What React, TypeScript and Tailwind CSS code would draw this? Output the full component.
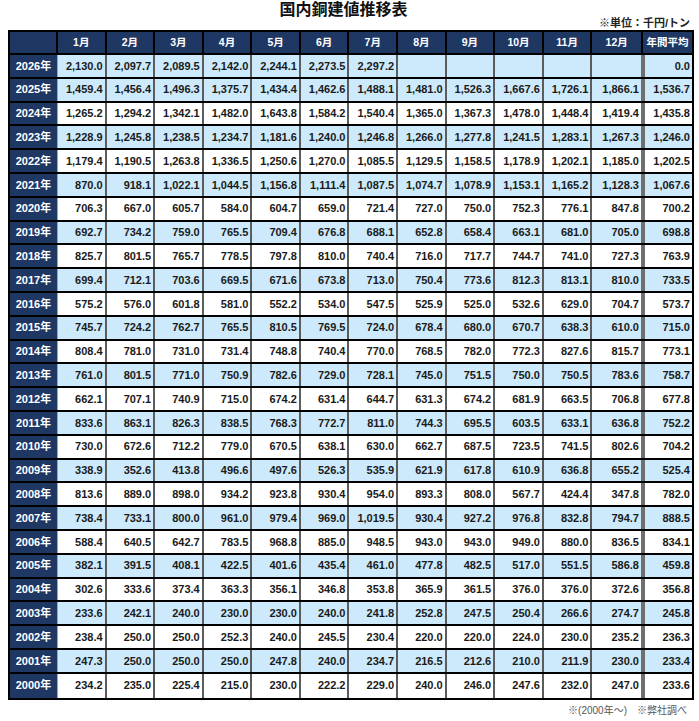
const months = ["1月", "2月", "3月", "4月", "5月", "6月", "7月", "8月", "9月", "10月", "11月", "12月"];

type Row = { year: number; values: string[]; avg: string };

const raw: [number, string, string][] = [
  [2026, "2,130.0 2,097.7 2,089.5 2,142.0 2,244.1 2,273.5 2,297.2 - - - - -", "0.0"],
  [2025, "1,459.4 1,456.4 1,496.3 1,375.7 1,434.4 1,462.6 1,488.1 1,481.0 1,526.3 1,667.6 1,726.1 1,866.1", "1,536.7"],
  [2024, "1,265.2 1,294.2 1,342.1 1,482.0 1,643.8 1,584.2 1,540.4 1,365.0 1,367.3 1,478.0 1,448.4 1,419.4", "1,435.8"],
  [2023, "1,228.9 1,245.8 1,238.5 1,234.7 1,181.6 1,240.0 1,246.8 1,266.0 1,277.8 1,241.5 1,283.1 1,267.3", "1,246.0"],
  [2022, "1,179.4 1,190.5 1,263.8 1,336.5 1,250.6 1,270.0 1,085.5 1,129.5 1,158.5 1,178.9 1,202.1 1,185.0", "1,202.5"],
  [2021, "870.0 918.1 1,022.1 1,044.5 1,156.8 1,111.4 1,087.5 1,074.7 1,078.9 1,153.1 1,165.2 1,128.3", "1,067.6"],
  [2020, "706.3 667.0 605.7 584.0 604.7 659.0 721.4 727.0 750.0 752.3 776.1 847.8", "700.2"],
  [2019, "692.7 734.2 759.0 765.5 709.4 676.8 688.1 652.8 658.4 663.1 681.0 705.0", "698.8"],
  [2018, "825.7 801.5 765.7 778.5 797.8 810.0 740.4 716.0 717.7 744.7 741.0 727.3", "763.9"],
  [2017, "699.4 712.1 703.6 669.5 671.6 673.8 713.0 750.4 773.6 812.3 813.1 810.0", "733.5"],
  [2016, "575.2 576.0 601.8 581.0 552.2 534.0 547.5 525.9 525.0 532.6 629.0 704.7", "573.7"],
  [2015, "745.7 724.2 762.7 765.5 810.5 769.5 724.0 678.4 680.0 670.7 638.3 610.0", "715.0"],
  [2014, "808.4 781.0 731.0 731.4 748.8 740.4 770.0 768.5 782.0 772.3 827.6 815.7", "773.1"],
  [2013, "761.0 801.5 771.0 750.9 782.6 729.0 728.1 745.0 751.5 750.0 750.5 783.6", "758.7"],
  [2012, "662.1 707.1 740.9 715.0 674.2 631.4 644.7 631.3 674.2 681.9 663.5 706.8", "677.8"],
  [2011, "833.6 863.1 826.3 838.5 768.3 772.7 811.0 744.3 695.5 603.5 633.1 636.8", "752.2"],
  [2010, "730.0 672.6 712.2 779.0 670.5 638.1 630.0 662.7 687.5 723.5 741.5 802.6", "704.2"],
  [2009, "338.9 352.6 413.8 496.6 497.6 526.3 535.9 621.9 617.8 610.9 636.8 655.2", "525.4"],
  [2008, "813.6 889.0 898.0 934.2 923.8 930.4 954.0 893.3 808.0 567.7 424.4 347.8", "782.0"],
  [2007, "738.4 733.1 800.0 961.0 979.4 969.0 1,019.5 930.4 927.2 976.8 832.8 794.7", "888.5"],
  [2006, "588.4 640.5 642.7 783.5 968.8 885.0 948.5 943.0 943.0 949.0 880.0 836.5", "834.1"],
  [2005, "382.1 391.5 408.1 422.5 401.6 435.4 461.0 477.8 482.5 517.0 551.5 586.8", "459.8"],
  [2004, "302.6 333.6 373.4 363.3 356.1 346.8 353.8 365.9 361.5 376.0 376.0 372.6", "356.8"],
  [2003, "233.6 242.1 240.0 230.0 230.0 240.0 241.8 252.8 247.5 250.4 266.6 274.7", "245.8"],
  [2002, "238.4 250.0 250.0 252.3 240.0 245.5 230.4 220.0 220.0 224.0 230.0 235.2", "236.3"],
  [2001, "247.3 250.0 250.0 250.0 247.8 240.0 234.7 216.5 212.6 210.0 211.9 230.0", "233.4"],
  [2000, "234.2 235.0 225.4 215.0 230.0 222.2 229.0 240.0 246.0 247.6 232.0 247.0", "233.6"],
];

const rows: Row[] = raw.map(([year, vals, avg]) => ({
  year,
  values: vals.split(" ").map((v) => (v === "-" ? "" : v)),
  avg,
}));

// 2026 and 2025 both blue, then alternate
const isBlue = (year: number) => year >= 2025 || year % 2 === 1;

function DataRow({ row, last }: { row: Row; last: boolean }) {
  const blue = isBlue(row.year);
  const bg = blue ? "bg-[#cdeafc]" : "bg-white";
  return (
    <div className={`grid grid-cols-[48px_repeat(12,minmax(0,1fr))_51px] h-[23.8px] ${last ? "" : "border-b-2 border-black"}`}>
      <div className="flex items-center justify-center bg-[#1f3763] text-white text-[11px] font-bold border-r border-[#9aa7b8]">
        {row.year}年
      </div>
      {row.values.map((v, i) => (
        <div
          key={i}
          className={`flex items-center justify-end pr-[2px] ${bg} text-[11px] font-bold text-[#1a1a1a] ${
            i === 11 ? "" : "border-r-2 border-[#5c5c5c]"
          }`}
        >
          {v}
        </div>
      ))}
      <div className={`flex items-center justify-end pr-[2px] ${bg} text-[11px] font-bold text-[#1a1a1a] border-l-[4px] border-[#6f6f6f]`}>
        {row.avg}
      </div>
    </div>
  );
}

export default function App() {
  return (
    <div
      className="w-[699px] h-[721px] bg-white overflow-hidden"
      style={{ fontFamily: '"Liberation Sans", "Noto Sans CJK JP", sans-serif' }}
    >
      <div className="h-[15px] leading-[19px] text-center text-[16px] font-bold text-[#111] pr-[12px]">
        国内銅建値推移表
      </div>
      <div className="h-[15px] flex justify-end items-center pt-[2px] pr-[9px] text-[11px] font-bold text-[#222]">
        ※単位：千円/トン
      </div>

      <div className="ml-[8px] w-[686px] border-2 border-black">
        <div className="grid grid-cols-[48px_repeat(12,minmax(0,1fr))_51px] h-[23px] bg-[#1f3763] border-b-2 border-black">
          <div className="border-r-2 border-black" />
          {months.map((m, i) => (
            <div
              key={m}
              className={`flex items-center justify-center text-white text-[10.5px] font-bold ${
                i === 11 ? "" : "border-r-2 border-black"
              }`}
            >
              {m}
            </div>
          ))}
          <div className="flex items-center justify-center text-white text-[10.5px] font-bold border-l-2 border-black">
            年間平均
          </div>
        </div>
        {rows.map((r, i) => (
          <DataRow key={r.year} row={r} last={i === rows.length - 1} />
        ))}
      </div>

      <div className="flex justify-end pr-[12px] mt-[5px] text-[10px] leading-[12px] text-[#555]">
        ※(2000年～)　※弊社調べ
      </div>
    </div>
  );
}
